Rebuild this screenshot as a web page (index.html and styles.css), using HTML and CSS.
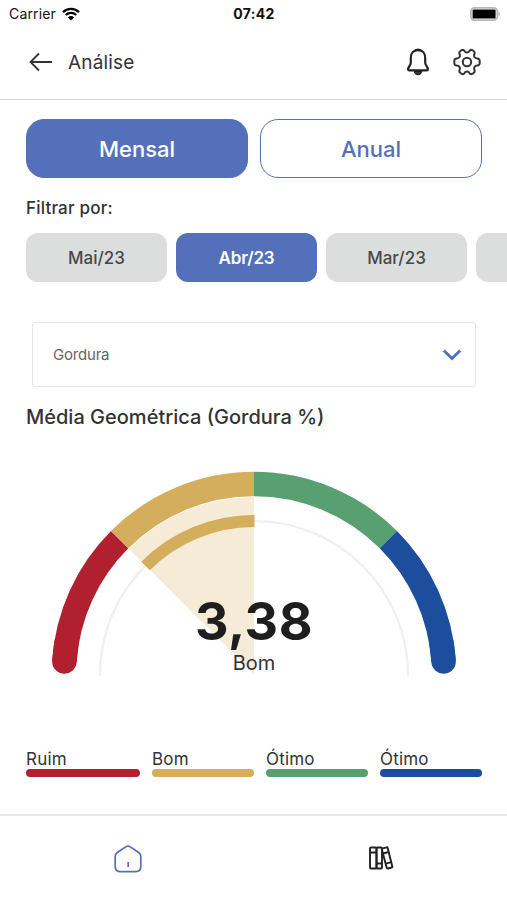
FILE: index.html
```
<!DOCTYPE html>
<html lang="pt-BR">
<head>
    <meta charset="UTF-8">
    <meta name="viewport" content="width=device-width, initial-scale=1.0">
    <title>Análise</title>
    <link rel="stylesheet" href="styles.css">
</head>
<body>
    <!-- Barra de status -->
    <div class="status-bar">
        <div class="carrier">
            <span class="carrier-name">Carrier</span>
            <svg class="wifi" width="18" height="14" viewBox="0 0 18 14">
                <path d="M1 5.2a11.4 11.4 0 0 1 16 0M3.8 8a7.4 7.4 0 0 1 10.4 0" fill="none" stroke="#000" stroke-width="2.3"/>
                <path d="M9 13.5 5.9 10.4a4.4 4.4 0 0 1 6.2 0z"/>
            </svg>
        </div>
        <span class="clock">07:42</span>
        <svg class="battery" width="31" height="14" viewBox="0 0 31 14">
            <rect x="0.9" y="0.9" width="26.4" height="12.2" rx="3.6" fill="#fff" stroke="#b8b8b8" stroke-width="1.8"/>
            <rect x="2.6" y="2.4" width="23" height="9.2" rx="1.2"/>
            <path d="M28.5 4.8c2 .6 2 3.8 0 4.4z" fill="#b8b8b8"/>
        </svg>
    </div>

    <header class="header">
        <svg class="back" width="24" height="20" viewBox="0 0 24 20">
            <path d="M23 10H1.5M10 1.5 1.5 10l8.5 8.5" fill="none" stroke="#333" stroke-width="1.8"/>
        </svg>
        <h1>Análise</h1>
        <svg class="bell" width="24" height="28" viewBox="0 0 24 28">
            <path d="M12 2.2c-4.500 0-7.200 3.200-7.200 7.500v5c0 2.500-2.700 4.300-2.700 6.500 0 .7.500 1.200 1.200 1.200h17.400c.7 0 1.200-.5 1.200-1.200 0-2.200-2.700-4-2.700-6.500v-5c0-4.300-2.700-7.500-7.200-7.500z" fill="none" stroke="#222" stroke-width="2.2"/>
            <path d="M8.500 23.500h7c-.5 2-1.800 3-3.500 3s-3-1-3.500-3z" fill="#444" stroke="#222" stroke-width="1.3"/>
            <path d="M9.500 2.300C10 .8 14 .8 14.500 2.300" fill="none" stroke="#222" stroke-width="1.500"/>
        </svg>
        <svg class="gear" width="28" height="28" viewBox="0 0 28 28">
            <circle cx="14" cy="14" r="4.200"/>
            <path d="M14 4.600Q15.700 4.600 16.400 3.100Q17.500 1.300 19.300 2.200L20.600 3Q22.200 4 21.500 6Q20.700 7.700 21.500 9.100Q22.300 10.400 24.200 10.500Q26.600 10.700 26.700 12.800V15.200Q26.600 17.300 24.200 17.500Q22.300 17.600 21.500 18.900Q20.700 20.300 21.500 22Q22.200 24 20.600 25L19.300 25.800Q17.500 26.700 16.400 24.900Q15.700 23.400 14 23.400Q12.300 23.400 11.600 24.900Q10.500 26.700 8.700 25.800L7.400 25Q5.800 24 6.500 22Q7.300 20.300 6.500 18.900Q5.700 17.600 3.800 17.500Q1.400 17.300 1.300 15.200V12.800Q1.400 10.700 3.800 10.500Q5.700 10.400 6.500 9.100Q7.300 7.700 6.500 6Q5.800 4 7.400 3L8.700 2.200Q10.500 1.300 11.600 3.100Q12.300 4.600 14 4.600Z"/>
        </svg>
    </header>

    <main class="content">
        <div class="tabs">
            <button class="tab active">Mensal</button>
            <button class="tab">Anual</button>
        </div>

        <p class="filter-label">Filtrar por:</p>
        <div class="months">
            <button class="month">Mai/23</button>
            <button class="month active">Abr/23</button>
            <button class="month">Mar/23</button>
            <button class="month"></button>
        </div>

        <div class="select">
            <span>Gordura</span>
            <svg width="20" height="14" viewBox="0 0 20 14">
                <path d="M1.800 2.500 10 10.500l8.200-8" fill="none" stroke="#5470ba" stroke-width="3"/>
            </svg>
        </div>

        <h2>Média Geométrica (Gordura %)</h2>

        <!-- Medidor -->
        <div class="gauge">
            <svg width="408" height="208" viewBox="0 0 408 208">
                <path d="M204 204 78.800 78.800A177 177 0 0 1 204 27z" fill="#f5ebd7"/>
                <path d="M50 206V205A154 154 0 0 1 358 205V206" fill="none" stroke="#efefef" stroke-width="2.200"/>
                <g fill="none" stroke-width="24.500">
                    <path d="M14.400 191.500A190 190 0 0 1 16.400 174" stroke="#b0202e" stroke-linecap="round"/>
                    <path d="M14.400 191.500A190 190 0 0 1 69.650 69.650" stroke="#b0202e"/>
                    <path d="M69.650 69.650A190 190 0 0 1 204 14" stroke="#d4ae5c"/>
                    <path d="M204 14A190 190 0 0 1 338.350 69.650" stroke="#58a071"/>
                    <path d="M393.600 191.500A190 190 0 0 0 391.600 174" stroke="#1d4e9e" stroke-linecap="round"/>
                    <path d="M338.350 69.650A190 190 0 0 1 393.600 191.500" stroke="#1d4e9e"/>
                </g>
                <path d="M95.500 96A153.500 153.500 0 0 1 204.500 51" fill="none" stroke="#d4ae5c" stroke-width="12"/>
            </svg>
            <div class="gauge-text">
                <strong>3,38</strong>
                <span>Bom</span>
            </div>
        </div>

        <div class="legend">
            <div class="legend-item ruim">Ruim</div>
            <div class="legend-item bom">Bom</div>
            <div class="legend-item otimo">Ótimo</div>
            <div class="legend-item excelente">Ótimo</div>
        </div>
    </main>

    <nav class="bottom-nav">
        <a class="nav-item">
            <svg width="28" height="28" viewBox="0 0 28 28" fill="none" stroke="#5470ba" stroke-width="1.700">
                <path d="M11.600 1.900Q14 .4 16.400 1.900L24.600 7.500Q26.800 9 26.800 11.700V21.500Q26.800 26.600 21.700 26.600H6.300Q1.200 26.600 1.200 21.500V11.700Q1.200 9 3.400 7.500Z"/>
                <path d="M14.200 17v5"/>
            </svg>
        </a>
        <a class="nav-item">
            <svg width="26" height="26" viewBox="0 0 26 26" fill="none" stroke="#222" stroke-width="1.900" stroke-linejoin="round">
                <rect x="2" y="2.500" width="6.500" height="21" rx="1"/>
                <rect x="8.500" y="2.500" width="5.500" height="21" rx="1"/>
                <path d="M14 3.600 18.600 2.300Q19.500 2.100 19.700 3L24.300 21.400Q24.500 22.300 23.600 22.500L19.900 23.500Q19 23.700 18.700 22.800L14 5z"/>
                <path d="M2 7.500h6.500M8.500 18.500h5.500M15 8.500l5.500-1.500M17.800 18.700l5.400-1.500"/>
            </svg>
        </a>
    </nav>
</body>
</html>
```
FILE: styles.css
```
/* Layout da página */
* {
    box-sizing: border-box;
}

body {
    display: flex;
    flex-direction: column;
    margin: 0;
    height: 900px;
    overflow: hidden;
    background-color: #fff;
    color: #333;
    font-family: Inter, "Liberation Sans", sans-serif;
}

svg {
    display: block;
    flex-shrink: 0;
}

h1, h2, p {
    margin: 0;
}

button {
    padding: 0;
    border: none;
    font-family: inherit;
}

/* Barra de status */
.status-bar {
    display: grid;
    grid-template-columns: 1fr auto 1fr;
    align-items: center;
    height: 27px;
    padding: 0 6px 0 9px;
    color: #111;
    font-size: 14px;
}

.carrier {
    display: flex;
    align-items: center;
    gap: 6px;
}

.carrier-name {
    letter-spacing: 0.15px;
}

.clock {
    margin-right: 2px;
    font-weight: 700;
    letter-spacing: 0.3px;
}

.battery {
    justify-self: end;
}

/* Cabeçalho */
.header {
    display: flex;
    align-items: center;
    height: 73px;
    padding: 0 26px 2px 29px;
    border-bottom: 1px solid #d8d8d8;
}

.header h1 {
    flex: 1;
    margin-left: 15px;
    font-size: 19px;
    font-weight: 400;
    letter-spacing: 0.15px;
}

.gear {
    margin-left: 23px;
    fill: none;
    stroke: #333;
    stroke-width: 2;
}

.content {
    padding: 19px 25px 0 26px;
}

/* Mensal / Anual */
.tabs {
    display: grid;
    grid-template-columns: 1fr 1fr;
    gap: 12px;
}

.tab {
    height: 59px;
    border: 1.5px solid #5470ba;
    border-radius: 18px;
    background-color: #fff;
    color: #5470ba;
    font-size: 22px;
    font-weight: 500;
}

.tab.active {
    background-color: #5470ba;
    color: #fff;
}

.filter-label {
    margin-top: 19px;
    font-size: 17px;
    font-weight: 500;
    letter-spacing: 0.2px;
    line-height: 22px;
}

.months {
    display: flex;
    gap: 9px;
    margin: 14px -25px 0 0;
    overflow: hidden;
}

.month {
    flex: 0 0 141px;
    height: 49px;
    border-radius: 12px;
    background-color: #dcdddd;
    color: #484848;
    font-size: 17px;
    font-weight: 450;
}

.month.active {
    background-color: #5470ba;
    color: #fff;
    font-weight: 600;
    letter-spacing: -0.2px;
}

/* Seletor */
.select {
    display: flex;
    align-items: center;
    justify-content: space-between;
    height: 65px;
    margin: 40px 6px 0;
    padding: 0 13px 0 20px;
    border: 1.5px solid #e6e6e6;
    border-radius: 3px;
    color: #666;
    font-size: 15px;
    letter-spacing: -0.2px;
}

h2 {
    margin-top: 17px;
    font-size: 20px;
    font-weight: 500;
    line-height: 26px;
}

/* Medidor */
.gauge {
    position: relative;
    width: 408px;
    height: 208px;
    margin: 40px 0 0 24px;
}

.gauge svg {
    overflow: visible;
}

.gauge-text {
    position: absolute;
    top: 123px;
    left: 0;
    width: 100%;
    display: flex;
    flex-direction: column;
    align-items: center;
    color: #333;
}

.gauge-text strong {
    color: #1e1e1e;
    font-size: 52px;
    letter-spacing: 0.5px;
    line-height: 58px;
}

.gauge-text span {
    font-size: 20px;
    line-height: 24px;
}

/* Legenda */
.legend {
    display: grid;
    grid-template-columns: 114px 102px 102px 102px;
    gap: 12px;
    margin-top: 71px;
}

.legend-item {
    font-size: 17px;
    letter-spacing: 0.2px;
    line-height: 21px;
}

.legend-item::after {
    content: "";
    display: block;
    height: 8px;
    margin-top: -1px;
    border-radius: 4px;
    background-color: #b0202e;
}

.bom::after {
    background-color: #d4ae5c;
}

.otimo::after {
    background-color: #58a071;
}

.excelente::after {
    background-color: #1d4e9e;
}

/* Navegação inferior */
.bottom-nav {
    display: grid;
    grid-template-columns: 1fr 1fr;
    height: 86px;
    margin-top: auto;
    padding-left: 2px;
    border-top: 2px solid #e6e6e6;
}

.nav-item {
    display: flex;
    justify-content: center;
    padding-top: 29px;
}
```
